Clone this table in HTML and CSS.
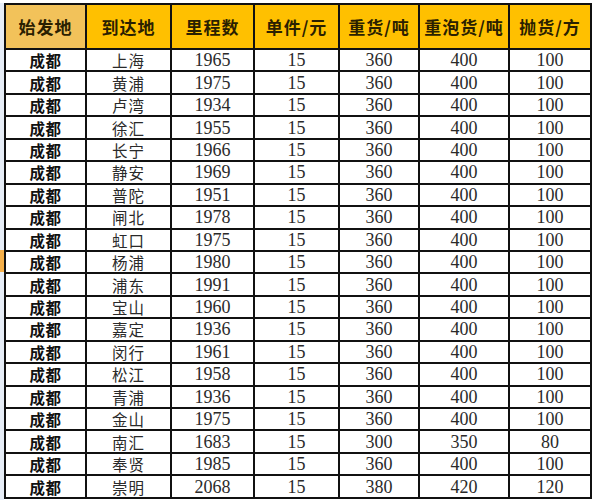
FILE: index.html
```html
<!DOCTYPE html>
<html lang="zh-CN">
<head>
<meta charset="utf-8">
<title>成都 线路运价表</title>
<link rel="stylesheet" href="styles.css">
</head>
<body>
<div class="sheet">
  <div class="rowheads">
    <div class="rh-top"></div>
    <div class="rh-head"></div>
    <div class="rh"></div><div class="rh"></div><div class="rh"></div><div class="rh"></div><div class="rh"></div>
    <div class="rh"></div><div class="rh"></div><div class="rh"></div><div class="rh"></div><div class="rh sel"></div>
    <div class="rh"></div><div class="rh"></div><div class="rh"></div><div class="rh"></div><div class="rh"></div>
    <div class="rh"></div><div class="rh"></div><div class="rh"></div><div class="rh"></div><div class="rh"></div>
  </div>
  <div class="grid">
    <div class="hd first">始发地</div><div class="hd">到达地</div><div class="hd">里程数</div><div class="hd">单件/元</div><div class="hd">重货/吨</div><div class="hd">重泡货/吨</div><div class="hd">抛货/方</div>

    <div class="c from">成都</div><div class="c to">上海</div><div class="c n">1965</div><div class="c n">15</div><div class="c n">360</div><div class="c n">400</div><div class="c n">100</div>
    <div class="c from">成都</div><div class="c to">黄浦</div><div class="c n">1975</div><div class="c n">15</div><div class="c n">360</div><div class="c n">400</div><div class="c n">100</div>
    <div class="c from">成都</div><div class="c to">卢湾</div><div class="c n">1934</div><div class="c n">15</div><div class="c n">360</div><div class="c n">400</div><div class="c n">100</div>
    <div class="c from">成都</div><div class="c to">徐汇</div><div class="c n">1955</div><div class="c n">15</div><div class="c n">360</div><div class="c n">400</div><div class="c n">100</div>
    <div class="c from">成都</div><div class="c to">长宁</div><div class="c n">1966</div><div class="c n">15</div><div class="c n">360</div><div class="c n">400</div><div class="c n">100</div>
    <div class="c from">成都</div><div class="c to">静安</div><div class="c n">1969</div><div class="c n">15</div><div class="c n">360</div><div class="c n">400</div><div class="c n">100</div>
    <div class="c from">成都</div><div class="c to">普陀</div><div class="c n">1951</div><div class="c n">15</div><div class="c n">360</div><div class="c n">400</div><div class="c n">100</div>
    <div class="c from">成都</div><div class="c to">闸北</div><div class="c n">1978</div><div class="c n">15</div><div class="c n">360</div><div class="c n">400</div><div class="c n">100</div>
    <div class="c from">成都</div><div class="c to">虹口</div><div class="c n">1975</div><div class="c n">15</div><div class="c n">360</div><div class="c n">400</div><div class="c n">100</div>
    <div class="c from">成都</div><div class="c to">杨浦</div><div class="c n">1980</div><div class="c n">15</div><div class="c n">360</div><div class="c n">400</div><div class="c n">100</div>
    <div class="c from">成都</div><div class="c to">浦东</div><div class="c n">1991</div><div class="c n">15</div><div class="c n">360</div><div class="c n">400</div><div class="c n">100</div>
    <div class="c from">成都</div><div class="c to">宝山</div><div class="c n">1960</div><div class="c n">15</div><div class="c n">360</div><div class="c n">400</div><div class="c n">100</div>
    <div class="c from">成都</div><div class="c to">嘉定</div><div class="c n">1936</div><div class="c n">15</div><div class="c n">360</div><div class="c n">400</div><div class="c n">100</div>
    <div class="c from">成都</div><div class="c to">闵行</div><div class="c n">1961</div><div class="c n">15</div><div class="c n">360</div><div class="c n">400</div><div class="c n">100</div>
    <div class="c from">成都</div><div class="c to">松江</div><div class="c n">1958</div><div class="c n">15</div><div class="c n">360</div><div class="c n">400</div><div class="c n">100</div>
    <div class="c from">成都</div><div class="c to">青浦</div><div class="c n">1936</div><div class="c n">15</div><div class="c n">360</div><div class="c n">400</div><div class="c n">100</div>
    <div class="c from">成都</div><div class="c to">金山</div><div class="c n">1975</div><div class="c n">15</div><div class="c n">360</div><div class="c n">400</div><div class="c n">100</div>
    <div class="c from">成都</div><div class="c to">南汇</div><div class="c n">1683</div><div class="c n">15</div><div class="c n">300</div><div class="c n">350</div><div class="c n">80</div>
    <div class="c from">成都</div><div class="c to">奉贤</div><div class="c n">1985</div><div class="c n">15</div><div class="c n">360</div><div class="c n">400</div><div class="c n">100</div>
    <div class="c from">成都</div><div class="c to">崇明</div><div class="c n">2068</div><div class="c n">15</div><div class="c n">380</div><div class="c n">420</div><div class="c n">120</div>
  </div>
</div>
</body>
</html>
```
FILE: styles.css
```css
* { box-sizing: border-box; }
html, body {
  margin: 0;
  padding: 0;
  background: #ffffff;
  width: 594px;
  height: 500px;
  overflow: hidden;
}
.sheet {
  display: flex;
  align-items: flex-start;
}
.rowheads {
  width: 4px;
  display: flex;
  flex-direction: column;
  background: #e6edf7;
  height: 500px;
}
.rh-top { height: 3px; background: #ffffff; }
.rh-head { height: 45px; }
.rh { height: 22.45px; }
.rh.sel { background: #f5b04a; }
.grid {
  margin-top: 3px;
  display: grid;
  grid-template-columns: 81px 85px 83px 85px 80px 90px 82px;
  grid-template-rows: 45px;
  grid-auto-rows: 22.45px;
  border-left: 2px solid #111;
  border-top: 2px solid #111;
}
.hd, .c {
  border-right: 2px solid #111;
  border-bottom: 2px solid #111;
  display: flex;
  align-items: center;
  justify-content: center;
  background: #ffffff;
  color: #1c1c1c;
  white-space: nowrap;
  line-height: 18px;
}
.hd {
  background: #ffc000;
  font-family: "Noto Sans CJK SC", sans-serif;
  font-weight: 700;
  font-size: 17px;
  color: #2a2000;
  letter-spacing: 1px;
}
.hd.first { background: #f2c25a; }
.from {
  font-family: "Noto Sans CJK SC", sans-serif;
  font-weight: 700;
  font-size: 15.5px;
  color: #111;
  letter-spacing: 0.5px;
}
.to {
  font-family: "Noto Sans CJK SC", sans-serif;
  font-weight: 400;
  font-size: 15.5px;
  color: #2a2a2a;
  letter-spacing: 1px;
}
.n {
  font-family: "Liberation Serif", serif;
  font-size: 18px;
  color: #2a2a2a;
}
```
